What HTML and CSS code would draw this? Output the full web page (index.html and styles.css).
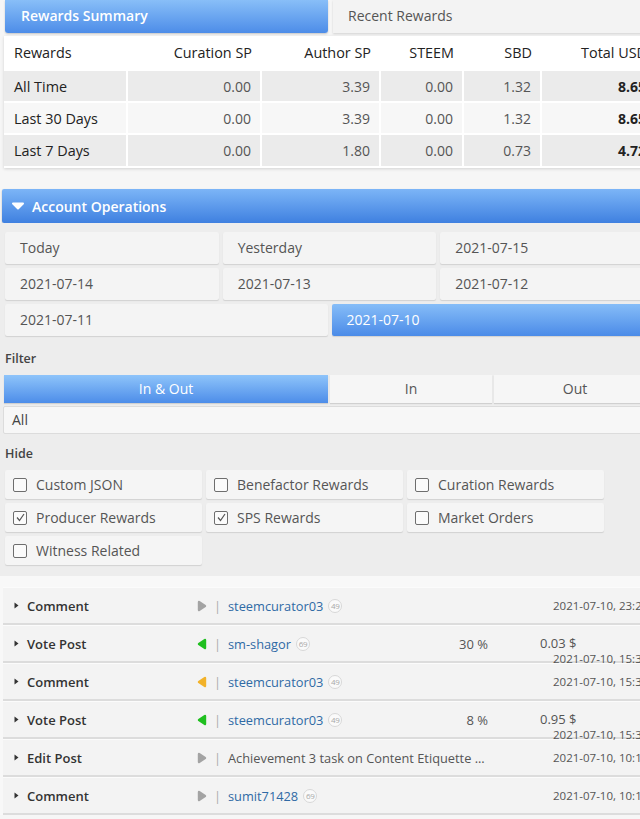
FILE: index.html
```html
<!DOCTYPE html>
<html>
<head>
<meta charset="utf-8">
<link rel="stylesheet" href="styles.css">
</head>
<body>
<div class="page">
  <div class="tabs">
    <div class="tab tab-active">Rewards Summary</div>
    <div class="tab tab-plain">Recent Rewards</div>
  </div>

  <div class="card">
    <table class="summary">
      <colgroup>
        <col class="c1"><col class="c2"><col class="c3"><col class="c4"><col class="c5"><col class="c6">
      </colgroup>
      <tr class="head">
        <th>Rewards</th><th>Curation SP</th><th>Author SP</th><th>STEEM</th><th>SBD</th><th>Total USD</th>
      </tr>
      <tr class="row-a">
        <td>All Time</td><td>0.00</td><td>3.39</td><td>0.00</td><td>1.32</td><td class="total">8.65</td>
      </tr>
      <tr class="row-b">
        <td>Last 30 Days</td><td>0.00</td><td>3.39</td><td>0.00</td><td>1.32</td><td class="total">8.65</td>
      </tr>
      <tr class="row-a">
        <td>Last 7 Days</td><td>0.00</td><td>1.80</td><td>0.00</td><td>0.73</td><td class="total">4.72</td>
      </tr>
    </table>
  </div>

  <div class="panel-head">
    <svg class="down" width="14" height="8" viewBox="0 0 14 8"><polygon points="2,1.5 12,1.5 7,6.5" fill="#fff" stroke="#fff" stroke-width="2" stroke-linejoin="round"/></svg>
    <span>Account Operations</span>
  </div>

  <div class="ops-panel">
    <div class="dates">
      <div class="date-btn">Today</div>
      <div class="date-btn">Yesterday</div>
      <div class="date-btn">2021-07-15</div>
      <div class="date-btn">2021-07-14</div>
      <div class="date-btn">2021-07-13</div>
      <div class="date-btn">2021-07-12</div>
      <div class="date-btn half">2021-07-11</div>
      <div class="date-btn half on">2021-07-10</div>
    </div>

    <div class="label filter-label">Filter</div>
    <div class="segment">
      <div class="seg on">In &amp; Out</div>
      <div class="seg">In</div>
      <div class="seg">Out</div>
    </div>
    <div class="select">All</div>

    <div class="label hide-label">Hide</div>
    <div class="checks">
      <div class="check"><span class="box"></span>Custom JSON</div>
      <div class="check"><span class="box"></span>Benefactor Rewards</div>
      <div class="check"><span class="box"></span>Curation Rewards</div>
      <div class="check"><span class="box"><svg width="11" height="11" viewBox="0 0 11 11"><polyline points="2,5.5 4.5,8.5 9,2" fill="none" stroke="#555" stroke-width="1.2"/></svg></span>Producer Rewards</div>
      <div class="check"><span class="box"><svg width="11" height="11" viewBox="0 0 11 11"><polyline points="2,5.5 4.5,8.5 9,2" fill="none" stroke="#555" stroke-width="1.2"/></svg></span>SPS Rewards</div>
      <div class="check"><span class="box"></span>Market Orders</div>
      <div class="check"><span class="box"></span>Witness Related</div>
    </div>
  </div>

  <div class="ops">
    <div class="op">
      <svg class="caret" width="5" height="7" viewBox="0 0 5 7"><polygon points="0.5,0.5 4.5,3.5 0.5,6.5" fill="#333"/></svg>
      <span class="op-name">Comment</span>
      <svg class="op-icon" width="10" height="12" viewBox="0 0 10 12"><polygon points="2,2 8,6 2,10" fill="#a3a3a3" stroke="#a3a3a3" stroke-width="2.4" stroke-linejoin="round"/></svg>
      <span class="sep">|</span>
      <span class="desc"><a class="user">steemcurator03</a><span class="badge">49</span></span>
      <span class="meta"><span class="date">2021-07-10, 23:29</span></span>
    </div>
    <div class="op">
      <svg class="caret" width="5" height="7" viewBox="0 0 5 7"><polygon points="0.5,0.5 4.5,3.5 0.5,6.5" fill="#333"/></svg>
      <span class="op-name">Vote Post</span>
      <svg class="op-icon" width="10" height="12" viewBox="0 0 10 12"><polygon points="8,2 2,6 8,10" fill="#1fbf1f" stroke="#1fbf1f" stroke-width="2.4" stroke-linejoin="round"/></svg>
      <span class="sep">|</span>
      <span class="desc"><a class="user">sm-shagor</a><span class="badge">69</span><span class="pct">30 %</span></span>
      <span class="meta vote"><span class="amount">0.03 $</span><span class="date">2021-07-10, 15:34</span></span>
    </div>
    <div class="op">
      <svg class="caret" width="5" height="7" viewBox="0 0 5 7"><polygon points="0.5,0.5 4.5,3.5 0.5,6.5" fill="#333"/></svg>
      <span class="op-name">Comment</span>
      <svg class="op-icon" width="10" height="12" viewBox="0 0 10 12"><polygon points="8,2 2,6 8,10" fill="#f2b229" stroke="#f2b229" stroke-width="2.4" stroke-linejoin="round"/></svg>
      <span class="sep">|</span>
      <span class="desc"><a class="user">steemcurator03</a><span class="badge">49</span></span>
      <span class="meta"><span class="date">2021-07-10, 15:34</span></span>
    </div>
    <div class="op">
      <svg class="caret" width="5" height="7" viewBox="0 0 5 7"><polygon points="0.5,0.5 4.5,3.5 0.5,6.5" fill="#333"/></svg>
      <span class="op-name">Vote Post</span>
      <svg class="op-icon" width="10" height="12" viewBox="0 0 10 12"><polygon points="8,2 2,6 8,10" fill="#1fbf1f" stroke="#1fbf1f" stroke-width="2.4" stroke-linejoin="round"/></svg>
      <span class="sep">|</span>
      <span class="desc"><a class="user">steemcurator03</a><span class="badge">49</span><span class="pct">8 %</span></span>
      <span class="meta vote"><span class="amount">0.95 $</span><span class="date">2021-07-10, 15:34</span></span>
    </div>
    <div class="op">
      <svg class="caret" width="5" height="7" viewBox="0 0 5 7"><polygon points="0.5,0.5 4.5,3.5 0.5,6.5" fill="#333"/></svg>
      <span class="op-name">Edit Post</span>
      <svg class="op-icon" width="10" height="12" viewBox="0 0 10 12"><polygon points="2,2 8,6 2,10" fill="#a3a3a3" stroke="#a3a3a3" stroke-width="2.4" stroke-linejoin="round"/></svg>
      <span class="sep">|</span>
      <span class="desc"><span class="title">Achievement 3 task on Content Etiquette ...</span></span>
      <span class="meta"><span class="date">2021-07-10, 10:14</span></span>
    </div>
    <div class="op">
      <svg class="caret" width="5" height="7" viewBox="0 0 5 7"><polygon points="0.5,0.5 4.5,3.5 0.5,6.5" fill="#333"/></svg>
      <span class="op-name">Comment</span>
      <svg class="op-icon" width="10" height="12" viewBox="0 0 10 12"><polygon points="2,2 8,6 2,10" fill="#a3a3a3" stroke="#a3a3a3" stroke-width="2.4" stroke-linejoin="round"/></svg>
      <span class="sep">|</span>
      <span class="desc"><a class="user">sumit71428</a><span class="badge">69</span></span>
      <span class="meta"><span class="date">2021-07-10, 10:17</span></span>
    </div>
  </div>
</div>
</body>
</html>
```

FILE: styles.css
```css
* { box-sizing: border-box; }

body {
  margin: 0;
  background: #f6f6f6;
  font-family: "Open Sans", "Liberation Sans", sans-serif;
  font-size: 14px;
  color: #555;
}

.page {
  width: 640px;
  height: 819px;
  overflow: hidden;
}

/* Tabs */
.tabs {
  display: flex;
  gap: 5px;
  padding-left: 5px;
  width: 680px;
  height: 33px;
}
.tab {
  height: 33px;
  line-height: 32px;
}
.tab-active {
  width: 323px;
  padding-left: 16px;
  background: linear-gradient(#88bef8, #4d8de8);
  color: #fff;
  font-weight: 600;
  border-radius: 0 0 3px 3px;
  box-shadow: 0 1px 2px rgba(0, 0, 0, 0.2);
}
.tab-plain {
  flex: 1;
  padding-left: 15px;
  background: #f3f3f3;
  color: #555;
  box-shadow: 0 1px 2px rgba(0, 0, 0, 0.15);
}

/* Summary card */
.card {
  margin: 3px 0 0 4px;
  width: 670px;
  padding-bottom: 2px;
  background: #fff;
  box-shadow: 0 1px 3px rgba(0, 0, 0, 0.15);
}
.summary {
  border-collapse: collapse;
  table-layout: fixed;
  width: 652px;
}
.c1 { width: 123px; }
.c2 { width: 134px; }
.c3 { width: 119px; }
.c4 { width: 83px; }
.c5 { width: 78px; }
.c6 { width: 115px; }

.summary th,
.summary td {
  padding: 0 9px 0 0;
  text-align: right;
  white-space: nowrap;
}
.summary th {
  height: 34px;
  font-weight: 500;
  font-size: 14.4px;
  color: #222;
}
.summary td {
  height: 32px;
  color: #555;
  border-right: 2px solid #fff;
  border-top: 2px solid #fff;
}
.summary th:first-child,
.summary td:first-child {
  text-align: left;
  padding-left: 10px;
  color: #222;
}
.summary td:first-child {
  font-weight: 500;
  font-size: 14.4px;
}
.row-a td { background: #ebebeb; }
.row-b td { background: #f7f7f7; }
.summary td.total {
  font-weight: 700;
  color: #222;
}

/* Account operations header */
.panel-head {
  margin: 21px 0 0 2px;
  width: 660px;
  height: 34px;
  display: flex;
  align-items: center;
  gap: 7px;
  padding-left: 9px;
  background: linear-gradient(#7cb5f7, #3f80e0);
  color: #fff;
  font-weight: 600;
  border-radius: 2px;
  box-shadow: 0 1px 2px rgba(0, 0, 0, 0.25);
}

.ops-panel {
  background: #ededed;
  padding: 9px 0 11px;
}

/* Dates */
.dates {
  display: grid;
  grid-template-columns: repeat(6, 1fr);
  gap: 4px;
  width: 649px;
  margin-left: 5px;
}
.date-btn {
  grid-column: span 2;
  height: 32px;
  line-height: 32px;
  padding-left: 15px;
  background: #f4f4f4;
  color: #555;
  border-radius: 2px;
  box-shadow: 0 1px 1px rgba(0, 0, 0, 0.12);
}
.date-btn.half { grid-column: span 3; }
.date-btn.on {
  background: linear-gradient(#86bdf8, #4b8be8);
  color: #fff;
}

/* Labels */
.label {
  margin-left: 5px;
  height: 18px;
  line-height: 18px;
  font-size: 12.5px;
  font-weight: 600;
  color: #444;
}
.filter-label { margin-top: 14px; }
.hide-label { margin-top: 11px; }

/* Segment */
.segment {
  display: grid;
  grid-template-columns: 324px 162px 162px;
  gap: 2px;
  margin: 7px 0 0 4px;
  width: 652px;
}
.seg {
  height: 28px;
  line-height: 28px;
  text-align: center;
  background: #f6f6f6;
  color: #555;
  box-shadow: 0 1px 1px rgba(0, 0, 0, 0.12);
}
.seg.on {
  background: linear-gradient(#8ec4fa, #4d8de9);
  color: #fff;
}

.select {
  margin: 3px 0 0 3px;
  width: 653px;
  height: 28px;
  line-height: 26px;
  padding-left: 8px;
  background: #f7f7f7;
  border: 1px solid #dcdcdc;
  border-radius: 2px;
  color: #444;
}

/* Checkboxes */
.checks {
  display: grid;
  grid-template-columns: repeat(3, 197px);
  gap: 4px;
  margin: 7px 0 0 5px;
}
.check {
  height: 29px;
  display: flex;
  align-items: center;
  gap: 9px;
  padding-left: 8px;
  background: #f5f5f5;
  color: #555;
  border-radius: 2px;
  box-shadow: 0 1px 1px rgba(0, 0, 0, 0.12);
}
.box {
  width: 14px;
  height: 14px;
  border: 1.5px solid #6e6e6e;
  border-radius: 2px;
  background: #fbfbfb;
  display: flex;
  align-items: center;
  justify-content: center;
}

/* Operations list */
.ops {
  padding-top: 11px;
  background: #f8f8f8;
}
.op {
  margin-left: 3px;
  width: 660px;
  height: 38px;
  display: flex;
  align-items: center;
  background: #f3f3f3;
  border-top: 1px solid #fbfbfb;
  border-bottom: 2px solid #dcdcdc;
  font-size: 12.8px;
}
.caret {
  margin-left: 11px;
  margin-right: 8px;
  flex: none;
}
.op-name {
  width: 170px;
  flex: none;
  font-size: 13px;
  font-weight: 600;
  color: #333;
}
.op-icon { flex: none; }
.sep {
  width: 21px;
  flex: none;
  text-align: center;
  color: #aaa;
}
.desc {
  width: 264px;
  flex: none;
  display: flex;
  align-items: center;
  white-space: nowrap;
}
.user { color: #2f6aa5; }
.title { color: #555; }
.badge {
  width: 14px;
  height: 14px;
  margin-left: 5px;
  border: 1px solid #d8d8d8;
  border-radius: 50%;
  background: #fafafa;
  color: #a8a8a8;
  font-size: 8px;
  letter-spacing: -0.3px;
  display: inline-flex;
  align-items: center;
  justify-content: center;
}
.pct {
  margin-left: auto;
  padding-right: 4px;
  font-size: 13px;
  color: #555;
}
.meta {
  margin-left: 48px;
  display: flex;
  flex-direction: column;
  white-space: nowrap;
}
.meta.vote {
  align-self: flex-start;
}
.amount {
  line-height: 35px;
  font-size: 13px;
  color: #555;
}
.date {
  padding-left: 13px;
  font-size: 11.5px;
  color: #555;
  line-height: 15px;
}
.meta.vote .date {
  margin-top: -10px;
}
```
